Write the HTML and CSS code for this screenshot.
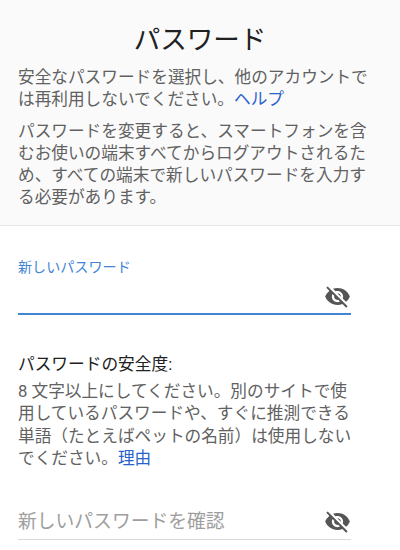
FILE: index.html
```html
<!DOCTYPE html>
<html lang="ja">
<head>
    <meta charset="UTF-8">
    <meta name="viewport" content="width=device-width, initial-scale=1.0">
    <title>パスワード</title>
    <link rel="stylesheet" href="styles.css">
</head>
<body>
    <header class="header">
        <h1>パスワード</h1>
        <p>安全なパスワードを選択し、他のアカウントでは再利用しないでください。<a href="#">ヘルプ</a></p>
        <p>パスワードを変更すると、スマートフォンを含むお使いの端末すべてからログアウトされるため、すべての端末で新しいパスワードを入力する必要があります。</p>
    </header>
    <main class="form">
        <label class="label" for="newPassword">新しいパスワード</label>
        <div class="field active">
            <input type="password" id="newPassword">
            <svg class="eye" viewBox="0 0 24 24"><path d="M12 7c2.76 0 5 2.24 5 5 0 .65-.13 1.26-.36 1.83l2.92 2.92c1.51-1.26 2.7-2.89 3.43-4.75-1.73-4.39-6-7.5-11-7.5-1.4 0-2.74.25-3.98.7l2.16 2.16C10.74 7.13 11.35 7 12 7zM2 4.27l2.28 2.28.46.46C3.08 8.3 1.78 10.02 1 12c1.73 4.39 6 7.5 11 7.5 1.55 0 3.03-.3 4.38-.84l.42.42L19.73 22 21 20.73 3.27 3 2 4.27zM7.53 9.8l1.55 1.55c-.05.21-.08.43-.08.65 0 1.66 1.34 3 3 3 .22 0 .44-.03.65-.08l1.55 1.55c-.67.33-1.41.53-2.2.53-2.76 0-5-2.24-5-5 0-.79.2-1.53.53-2.2zm4.31-.78l3.15 3.15.02-.16c0-1.66-1.34-3-3-3l-.17.01z"/></svg>
        </div>
        <h2>パスワードの安全度:</h2>
        <p class="hint">8 文字以上にしてください。別のサイトで使用しているパスワードや、すぐに推測できる単語（たとえばペットの名前）は使用しないでください。<a href="#">理由</a></p>
        <div class="field confirm">
            <input type="password" id="confirmPassword" placeholder="新しいパスワードを確認">
            <svg class="eye" viewBox="0 0 24 24"><path d="M12 7c2.76 0 5 2.24 5 5 0 .65-.13 1.26-.36 1.83l2.92 2.92c1.51-1.26 2.7-2.89 3.43-4.75-1.73-4.39-6-7.5-11-7.5-1.4 0-2.74.25-3.98.7l2.16 2.16C10.74 7.13 11.35 7 12 7zM2 4.27l2.28 2.28.46.46C3.08 8.3 1.78 10.02 1 12c1.73 4.39 6 7.5 11 7.5 1.55 0 3.03-.3 4.38-.84l.42.42L19.73 22 21 20.73 3.27 3 2 4.27zM7.53 9.8l1.55 1.55c-.05.21-.08.43-.08.65 0 1.66 1.34 3 3 3 .22 0 .44-.03.65-.08l1.55 1.55c-.67.33-1.41.53-2.2.53-2.76 0-5-2.24-5-5 0-.79.2-1.53.53-2.2zm4.31-.78l3.15 3.15.02-.16c0-1.66-1.34-3-3-3l-.17.01z"/></svg>
        </div>
    </main>
</body>
</html>
```
FILE: styles.css
```css
* {
    box-sizing: border-box;
}

body {
    margin: 0;
    background: #fff;
    color: #616161;
    font-family: Roboto, 'Noto Sans CJK JP', sans-serif;
    font-size: 16.66px;
    line-height: 22.3px;
    overflow: hidden;
}

.header {
    height: 226px;
    padding: 22px 27px 0 18px;
    background: #fafafa;
    border-bottom: 1px solid #e8e8e8;
}

h1 {
    margin: 0 0 9px;
    color: #212121;
    font-size: 26.5px;
    font-weight: 400;
    line-height: 36px;
    text-align: center;
    padding-left: 9px;
}

p {
    margin: 0 0 9px;
}

a {
    color: #2962cc;
    text-decoration: none;
}

.form {
    padding: 30px 49px 0 18px;
}

.label {
    display: block;
    color: #4285d6;
    font-size: 14.1px;
    line-height: 22px;
}

.field {
    display: flex;
    align-items: center;
    height: 37px;
    border-bottom: 1px solid #dadada;
}

.field.active {
    border-bottom: 2px solid #4285d6;
}

.field input {
    flex: 1;
    min-width: 0;
    padding: 2px 0 0;
    border: none;
    outline: none;
    background: transparent;
    font: inherit;
    font-size: 18.8px;
}

.field input::placeholder {
    color: #9e9e9e;
}

.eye {
    width: 27px;
    height: 27px;
    margin-top: 1px;
    fill: #555;
}

.confirm .eye {
    margin-top: 0;
}

h2 {
    margin: 39px 0 5px;
    color: #212121;
    font-size: 16.7px;
    font-weight: 400;
    line-height: 22px;
}

/* a little wider than the fields so the third line keeps its last character */
.hint {
    margin: 0 -3px 33px 0;
}
```
